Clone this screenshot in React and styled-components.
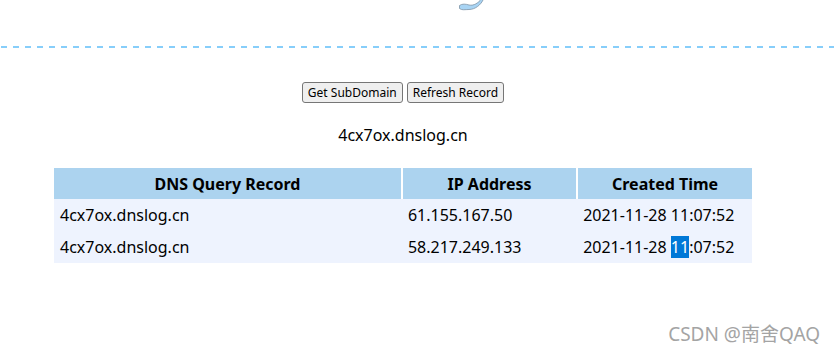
import React from "react"
import styled, { createGlobalStyle } from "styled-components"

const GlobalStyle = createGlobalStyle`
	html, body {
		margin: 0;
		padding: 0;
		background: #fff;
		font-family: "Noto Sans", "Open Sans", "Noto Sans CJK SC", sans-serif;
		color: #000;
	}
`

const records = [
	{ domain: "4cx7ox.dnslog.cn", ip: "61.155.167.50", date: "2021-11-28", time: "11:07:52" },
	{ domain: "4cx7ox.dnslog.cn", ip: "58.217.249.133", date: "2021-11-28", time: "11:07:52", selected: true },
]

const App = () => {
	return (
		<Page>
			<GlobalStyle />
			<Header>
				<Logo width="28" height="12" viewBox="0 0 28 12">
					<path d="M1.5 5.5 C4 3.5 8 4 11 5 C16 6 20 3 23.5 -1 L25.5 -1 C23 5 17 9.5 11 9.5 C7 9.5 4 10.5 1.5 8.5 Z" fill="#a8d4f4" stroke="#7d93a6" strokeWidth="0.8" />
				</Logo>
			</Header>
			<Divider />
			<Main>
				<Buttons>
					<Button>Get SubDomain</Button>
					<Button>Refresh Record</Button>
				</Buttons>
				<Domain>4cx7ox.dnslog.cn</Domain>
				<Table>
					<thead>
						<tr>
							<Th $w={350}>DNS Query Record</Th>
							<Th $w={174}>IP Address</Th>
							<Th $w={174}>Created Time</Th>
						</tr>
					</thead>
					<tbody>
						{records.map((r, i) => (
							<tr key={i}>
								<Td>{r.domain}</Td>
								<Td>{r.ip}</Td>
								<Td>
									{r.date}{" "}
									{r.selected ? (
										<>
											<Selected>11</Selected>{r.time.slice(2)}
										</>
									) : r.time}
								</Td>
							</tr>
						))}
					</tbody>
				</Table>
			</Main>
			<Watermark>CSDN @南舍QAQ</Watermark>
		</Page>
	)
}

const Page = styled.div`
	position: relative;
	width: 834px;
	height: 355px;
	overflow: hidden;
`

const Header = styled.div`
	height: 12px;
	display: flex;
	padding-left: 458px;
`

const Logo = styled.svg`
	display: block;
`

const Divider = styled.div`
	margin-top: 34px;
	height: 2px;
	background-image: linear-gradient(to right, #87cefa 0 6px, transparent 6px 12px);
	background-size: 12px 2px;
	background-repeat: repeat-x;
	background-position: 1px 0;
`

const Main = styled.div`
	width: 806px;
	display: flex;
	flex-direction: column;
	align-items: center;
	padding-top: 34px;
`

const Buttons = styled.div`
	display: flex;
	gap: 4px;
`

const Button = styled.button`
	font-family: "Noto Sans", sans-serif;
	font-size: 12px;
	height: 21px;
	padding: 0 5px;
	background: #efefef;
	border: 1px solid #767676;
	border-radius: 3px;
	color: #000;
	line-height: 17px;
`

const Domain = styled.div`
	margin-top: 20px;
	font-size: 16px;
	line-height: 24px;
`

const Table = styled.table`
	margin-top: 21px;
	width: 698px;
	border-collapse: collapse;
	font-size: 16px;
`

const Th = styled.th`
	width: ${p => p.$w}px;
	height: 31px;
	padding: 0;
	background: #acd3ef;
	font-weight: bold;
	text-align: center;
	border-left: 2px solid #fff;
	&:first-child {
		border-left: none;
	}
`

const Td = styled.td`
	height: 32px;
	padding: 0 6px;
	background: #eef3fe;
	white-space: nowrap;
`

const Selected = styled.span`
	background: #0078d7;
	color: #fff;
`

const Watermark = styled.div`
	position: absolute;
	right: 14px;
	bottom: 8px;
	font-size: 19px;
	color: #a4a4a4;
	font-family: "Noto Sans", "Noto Sans CJK SC", sans-serif;
`

export default App
